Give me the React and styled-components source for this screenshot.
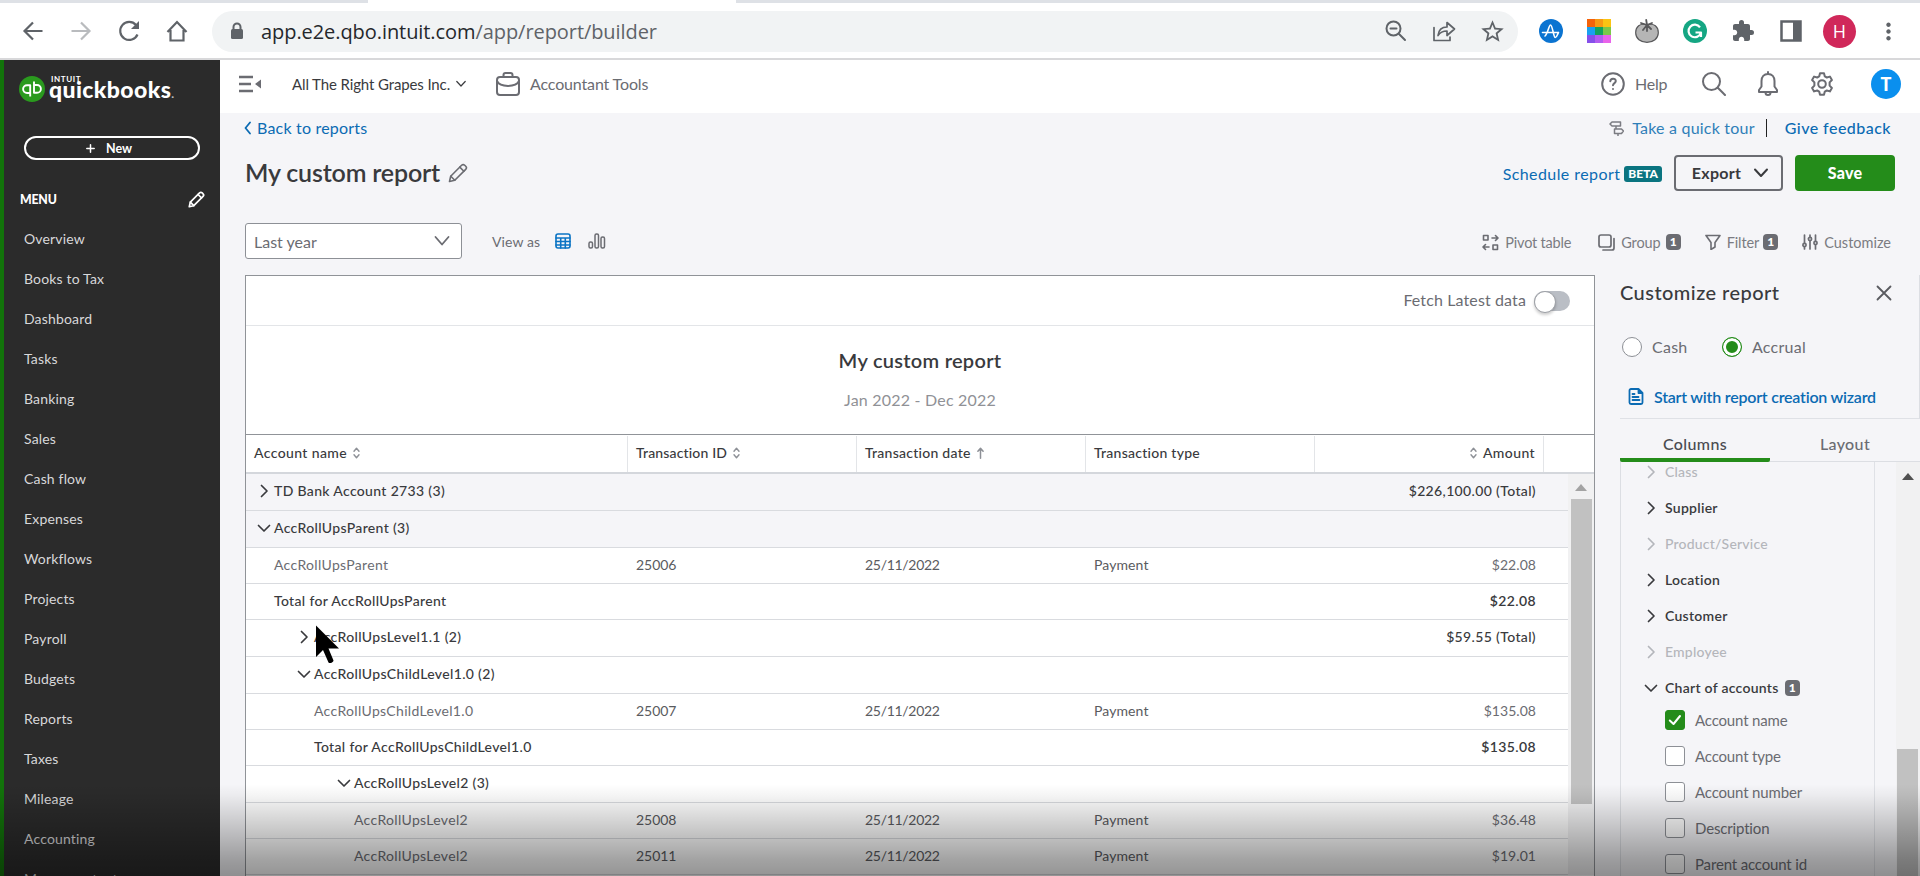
import React from 'react'
import styled, { createGlobalStyle } from 'styled-components'
import { MdExtension, MdStarBorder, MdMoreVert } from 'react-icons/md'

const menuItems = [
  'Overview', 'Books to Tax', 'Dashboard', 'Tasks', 'Banking', 'Sales', 'Cash flow', 'Expenses', 'Workflows',
  'Projects', 'Payroll', 'Budgets', 'Reports', 'Taxes', 'Mileage', 'Accounting', 'My accountant',
]

const rows = [
  { kind: 'group', level: 0, open: false, name: 'TD Bank Account 2733 (3)', amount: '$226,100.00 (Total)', h: 37, shade: true },
  { kind: 'group', level: 0, open: true, name: 'AccRollUpsParent (3)', h: 37, shade: true },
  { kind: 'item', level: 0, name: 'AccRollUpsParent', id: '25006', amount: '$22.08', h: 36 },
  { kind: 'total', level: 0, name: 'Total for AccRollUpsParent', amount: '$22.08', h: 36 },
  { kind: 'group', level: 1, open: false, name: 'AccRollUpsLevel1.1 (2)', amount: '$59.55 (Total)', h: 37 },
  { kind: 'group', level: 1, open: true, name: 'AccRollUpsChildLevel1.0 (2)', h: 37 },
  { kind: 'item', level: 1, name: 'AccRollUpsChildLevel1.0', id: '25007', amount: '$135.08', h: 36 },
  { kind: 'total', level: 1, name: 'Total for AccRollUpsChildLevel1.0', amount: '$135.08', h: 36 },
  { kind: 'group', level: 2, open: true, name: 'AccRollUpsLevel2 (3)', h: 37 },
  { kind: 'item', level: 2, name: 'AccRollUpsLevel2', id: '25008', amount: '$36.48', h: 36 },
  { kind: 'item', level: 2, name: 'AccRollUpsLevel2', id: '25011', amount: '$19.01', h: 36 },
]

const groups = [
  { name: 'Class', off: true },
  { name: 'Supplier' },
  { name: 'Product/Service', off: true },
  { name: 'Location' },
  { name: 'Customer' },
  { name: 'Employee', off: true },
]

const fields = ['Account name', 'Account type', 'Account number', 'Description', 'Parent account id']

/* ---------- icons ---------- */

const Svg = ({ w = 20, h = w, box, sw = 2, children, ...rest }) => (
  <svg width={w} height={h} viewBox={box || `0 0 ${w} ${h}`} fill="none" stroke="currentColor"
    strokeWidth={sw} strokeLinecap="round" strokeLinejoin="round" {...rest}>{children}</svg>
)

const Chevron = ({ open, sw = 1.7 }) => (
  <Svg w={16} sw={sw}>
    {open ? <path d="M2.5 5.5 8 11l5.5-5.5" /> : <path d="M5.5 2.5 11 8l-5.5 5.5" />}
  </Svg>
)

const Pencil = ({ size, sw = 1.6 }) => (
  <Svg w={size} box="0 0 20 20" sw={sw}>
    <path d="M1.5 18.5l1.2-5.3L13.6 2.3a2.2 2.2 0 0 1 3.1 0l1 1a2.2 2.2 0 0 1 0 3.1L6.8 17.3z" />
    <path d="M11.8 4.1l4.1 4.1M2.8 13.2l4 4" />
  </Svg>
)

const Sort = () => (
  <Svg w={7} h={12} sw={1.4}><path d="M1 4.2l2.5-3L6 4.2M1 7.8l2.5 3L6 7.8" /></Svg>
)

/* ---------- global + frame ---------- */

const GlobalStyle = createGlobalStyle`
  * { box-sizing: border-box; }
  body {
    margin: 0;
    overflow: hidden;
    background: #fff;
    font-family: Lato, "Liberation Sans", sans-serif;
    color: #393a3d;
  }
  svg { flex: none; display: block; }
`

const Page = styled.div`
  position: relative;
  display: flex;
  flex-direction: column;
  width: 1920px;
  height: 876px;
  overflow: hidden;
`

const Fade = styled.div`
  position: absolute;
  left: 0;
  right: 0;
  bottom: 0;
  height: 92px;
  background: linear-gradient(to bottom, rgba(0,0,0,0) 0%, rgba(0,0,0,.04) 12%, rgba(0,0,0,.25) 58%, rgba(0,0,0,.36) 82%, rgba(0,0,0,.42) 100%);
  pointer-events: none;
`

/* ---------- browser ---------- */

const TabStrip = styled.div`
  display: flex;
  height: 3px;
  background: #dee1e6;
  flex: none;
`

const ActiveTab = styled.div`
  width: 368px;
  margin-left: 368px;
  background: #fff;
`

const BrowserBar = styled.div`
  display: flex;
  align-items: center;
  flex: none;
  height: 57px;
  padding: 0 10px 0 21px;
  border-bottom: 2px solid #d8d8da;
  color: #5f6368;
`

const NavIcons = styled.div`
  display: flex;
  gap: 24px;
  width: 191px;
  .off { color: #b9bbbe; }
`

const Address = styled.div`
  display: flex;
  align-items: center;
  flex: none;
  width: 1306px;
  height: 41px;
  margin-top: 1px;
  padding: 0 14px 0 18px;
  border-radius: 21px;
  background: #f1f3f4;
`

const Url = styled.div`
  flex: 1;
  margin-left: 17px;
  font: 400 20px "Open Sans", sans-serif;
  letter-spacing: -0.07px;
  color: #5f6368;
  b { font-weight: 400; color: #25282c; }
`

const AddressIcons = styled.div`
  display: flex;
  align-items: center;
  gap: 24px;
  svg:last-child { margin: 0 -1.5px; }
`

const Extensions = styled.div`
  display: flex;
  align-items: center;
  gap: 24px;
  margin: 1px 0 0 21px;
`

const Avatar = styled.div`
  display: flex;
  align-items: center;
  justify-content: center;
  width: ${p => p.$size}px;
  height: ${p => p.$size}px;
  margin: ${p => p.$m || 0};
  border-radius: 50%;
  background: ${p => p.$bg};
  color: #fff;
  font-size: 18px;
  font-weight: ${p => p.$bold ? 900 : 400};
  font-family: ${p => p.$bold ? 'Lato' : '"Open Sans"'}, sans-serif;
`

/* ---------- sidebar ---------- */

const Body = styled.div`
  display: flex;
  flex: 1;
  min-height: 0;
`

const Sidebar = styled.nav`
  flex: none;
  width: 220px;
  height: 816px;
  overflow: hidden;
  border-left: 4px solid #12730a;
  background: #2b2b2b;
  color: #fff;
`

const Logo = styled.div`
  display: flex;
  align-items: flex-start;
  gap: 4px;
  height: 76px;
  padding: 15px 0 0 15px;
`

const Wordmark = styled.div`
  display: flex;
  flex-direction: column;
  width: 130px;
  padding-top: 1px;
  small {
    height: 7px;
    margin-left: 2px;
    font: 700 8px/7px Lato, sans-serif;
    letter-spacing: .6px;
  }
  span {
    margin-top: -5px;
    font: 900 23px/22px Lato, sans-serif;
    letter-spacing: .4px;
    white-space: nowrap;
  }
  i { font-size: 12px; color: #bbb; font-style: normal; }
`

const NewButton = styled.button`
  display: flex;
  align-items: center;
  justify-content: center;
  gap: 11px;
  width: 176px;
  height: 24px;
  margin-left: 20px;
  padding: 0 6px 0 0;
  border: 2px solid #fff;
  border-radius: 12px;
  background: none;
  color: #fff;
  font: 700 12.5px Lato, sans-serif;
`

const MenuHead = styled.div`
  display: flex;
  align-items: center;
  justify-content: space-between;
  height: 40px;
  margin-top: 19px;
  padding: 1px 15px 0 16px;
  font-size: 12.3px;
  font-weight: 900;
  letter-spacing: -.2px;
`

const MenuItem = styled.div`
  height: 40px;
  padding-left: 20px;
  font-size: 14px;
  line-height: 40px;
  letter-spacing: .16px;
  color: #d8d8da;
`

/* ---------- main ---------- */

const Main = styled.main`
  display: flex;
  flex-direction: column;
  width: 1700px;
  background: #f5f5f8;
`

const Header = styled.header`
  display: flex;
  align-items: center;
  flex: none;
  height: 53px;
  padding: 0 19px 5px 19px;
  background: #fff;
  color: #6b6c72;
`

const Company = styled.div`
  display: flex;
  align-items: center;
  gap: 6px;
  width: 204px;
  margin-left: 31px;
  font-size: 15px;
  letter-spacing: -.12px;
  color: #393a3d;
  white-space: nowrap;
`

const Tools = styled.div`
  display: flex;
  align-items: center;
  gap: 10px;
  flex: 1;
  padding-bottom: 1px;
  font-size: 16px;
  letter-spacing: -.15px;
`

const HeaderRight = styled.div`
  display: flex;
  align-items: center;
  span { width: 67px; margin: 0 0 2px 10px; font-size: 16px; letter-spacing: -.2px; }
  .bell { margin: 0 30px; }
  .gear { margin-right: 37px; }
`

const LinkRow = styled.div`
  display: flex;
  align-items: center;
  flex: none;
  height: 31px;
  padding: 0 29px 2px 24px;
  color: #0b6bb3;
`

const Link = styled.a`
  margin-left: ${p => p.$ml || 0}px;
  font-size: 16px;
  font-weight: ${p => p.$medium ? 500 : 400};
  letter-spacing: ${p => p.$ls}px;
  color: ${p => p.$soft ? '#2f7fb8' : '#0b6bb3'};
  white-space: nowrap;
`

const Rule = styled.div`
  width: 1px;
  height: 18px;
  margin: 0 18px 0 11px;
  background: #222;
`

const Push = styled.div`flex: 1;`

const TitleRow = styled.div`
  display: flex;
  align-items: center;
  flex: none;
  height: 58px;
  padding: 0 25px;
  color: #6b6c72;
`

const Title = styled.h1`
  margin: 0 8px 3px 0;
  font-size: 25px;
  font-weight: 600;
  letter-spacing: -.18px;
  color: #393a3d;
`

const Beta = styled.span`
  margin: 2px 12px 0 4px;
  padding: 0 4px;
  border-radius: 3px;
  background: #0a7480;
  color: #fff;
  font-size: 12px;
  font-weight: 900;
  line-height: 16px;
`

const Button = styled.button`
  display: flex;
  align-items: center;
  justify-content: center;
  gap: 12px;
  width: ${p => p.$primary ? 100 : 109}px;
  height: 36px;
  margin-left: ${p => p.$primary ? 12 : 0}px;
  padding: 0 0 1px ${p => p.$primary ? 0 : 4}px;
  border: 2px solid ${p => p.$primary ? '#248c1a' : '#6b6c72'};
  border-radius: 4px;
  background: ${p => p.$primary ? '#248c1a' : 'transparent'};
  color: ${p => p.$primary ? '#fff' : '#393a3d'};
  font: ${p => p.$primary ? 900 : 700} 16px Lato, sans-serif;
  letter-spacing: .25px;
`

const FilterRow = styled.div`
  display: flex;
  align-items: center;
  flex: none;
  height: 73px;
  padding: 5px 29px 0 25px;
  color: #6b6c72;
`

const Select = styled.div`
  display: flex;
  align-items: center;
  justify-content: space-between;
  width: 217px;
  height: 36px;
  margin-right: 30px;
  padding: 0 11px 0 8px;
  border: 1px solid #8d9096;
  border-radius: 3px;
  background: #fff;
  font-size: 16px;
`

const ViewAs = styled.div`
  display: flex;
  align-items: center;
  gap: 15px;
  font-size: 14px;
  letter-spacing: .1px;
  svg + svg { margin-left: 2px; }
`

const Action = styled.div`
  display: flex;
  align-items: center;
  gap: 6px;
  margin-left: ${p => p.$ml}px;
  padding-top: 2px;
  font-size: 14.5px;
  letter-spacing: ${p => p.$ls || 0}px;
  color: #7b7c82;
  svg { color: #6b6c72; }
`

const Count = styled.span`
  width: 15px;
  height: 16px;
  margin-left: ${p => p.$ml || 0}px;
  border-radius: 4px;
  background: #6b6c72;
  color: #fff;
  font-size: 12px;
  font-weight: 900;
  line-height: 16px;
  text-align: center;
  letter-spacing: 0;
`

/* ---------- report ---------- */

const Work = styled.div`
  display: flex;
  flex: 1;
  min-height: 0;
  padding-left: 25px;
`

const Report = styled.section`
  flex: none;
  width: 1350px;
  border: 1px solid #909398;
  border-bottom: 0;
  background: #fff;
`

const Fetch = styled.div`
  display: flex;
  align-items: center;
  justify-content: flex-end;
  gap: 8px;
  height: 50px;
  padding-right: 24px;
  border-bottom: 1px solid #e3e5e8;
  color: #6b6c72;
  font-size: 16px;
  letter-spacing: .12px;
  span { margin-bottom: 2px; }
`

const Toggle = styled.div`
  width: 36px;
  height: 20px;
  border-radius: 10px;
  background: #babec5;
  &::before {
    content: '';
    display: block;
    width: 20px;
    height: 20px;
    border: 1px solid #9c9fa5;
    border-radius: 50%;
    background: #fff;
    box-shadow: 0 2px 3px rgba(0,0,0,.2);
  }
`

const ReportTitle = styled.div`
  display: flex;
  flex-direction: column;
  align-items: center;
  height: 108px;
  padding-top: 22px;
  h2 { margin: 0; font-size: 20px; font-weight: 600; line-height: 24px; letter-spacing: .28px; }
  p { margin: 18px 0 0; font-size: 16px; line-height: 20px; letter-spacing: .21px; color: #909196; }
`

const Grid = styled.div`
  display: grid;
  grid-template-columns: 382px 229px 229px 229px 229px 1fr;
`

const HeadRow = styled(Grid)`
  height: 40px;
  border-top: 1px solid #909398;
  border-bottom: 2px solid #d4d7dc;
`

const HeadCell = styled.div`
  display: flex;
  align-items: center;
  gap: 6px;
  justify-content: ${p => p.$right ? 'flex-end' : 'flex-start'};
  margin-top: 1px;
  padding: 0 8px 3px;
  border-right: 1px solid #e3e5e8;
  font-size: 14px;
  font-weight: 500;
  letter-spacing: ${p => p.$ls || .26}px;
  svg { color: #8d9096; }
  &:last-child { border: 0; }
`

const TableBody = styled.div`
  display: flex;
  background: #f5f5f8;
`

const Rows = styled.div`
  width: 1322px;
`

const Row = styled(Grid)`
  align-items: center;
  height: ${p => p.$h}px;
  padding-bottom: ${p => p.$h === 37 ? 3 : 2}px;
  border-bottom: 1px solid #d9dbdf;
  background: ${p => p.$shade ? '#f5f5f8' : '#fff'};
  font-size: 14px;
  font-weight: ${p => p.$item ? 400 : 500};
  letter-spacing: ${p => p.$item ? .33 : .34}px;
  color: ${p => p.$item ? '#6b6c72' : '#393a3d'};
`

const Name = styled.div`
  display: flex;
  align-items: center;
  gap: 2px;
  padding-left: ${p => 28 + p.$level * 40}px;
  white-space: nowrap;
  svg { margin-left: -18px; }
`

const Cell = styled.div`
  padding-left: 8px;
  letter-spacing: ${p => p.$ls || 0}px;
  color: #5a5b60;
`

const Amount = styled.div`
  padding-right: 8px;
  text-align: right;
  font-weight: ${p => p.$bold ? 600 : 'inherit'};
  letter-spacing: ${p => p.$ls}px;
`

const Scroll = styled.div`
  display: flex;
  flex-direction: column;
  align-items: center;
  width: 26px;
  padding-top: 10px;
  background: #f1f1f2;
  color: #a3a3a3;
`

const Thumb = styled.div`
  width: 21px;
  height: ${p => p.$h}px;
  margin-top: ${p => p.$mt}px;
  background: #c1c1c1;
`

/* ---------- customize panel ---------- */

const Panel = styled.aside`
  flex: 1;
  padding-left: 25px;
`

const PanelTop = styled.div`
  height: 144px;
  border-right: 1px solid #dcdee3;
  border-bottom: 1px solid #dfe1e6;
`

const PanelHead = styled.div`
  display: flex;
  align-items: center;
  justify-content: space-between;
  height: 36px;
  padding-right: 27px;
  font-size: 20px;
  font-weight: 500;
  letter-spacing: .45px;
  span { margin-bottom: 2px; }
  svg { color: #5a5b60; }
`

const Radios = styled.div`
  display: flex;
  height: 72px;
  align-items: center;
  gap: 10px;
  padding-left: 2px;
  font-size: 16px;
  color: #6b6c72;
  span { width: 60px; margin-top: -2px; letter-spacing: .25px; }
`

const Radio = styled.div`
  width: 20px;
  height: 20px;
  border: 1px solid ${p => p.$on ? '#248c1a' : '#8d9096'};
  border-radius: 50%;
  background: ${p => p.$on ? '#248c1a' : '#fff'};
  box-shadow: inset 0 0 0 3px #fff;
`

const Wizard = styled.div`
  display: flex;
  align-items: center;
  gap: 10px;
  height: 26px;
  padding-left: 8px;
  color: #0b6bb3;
  font-size: 16px;
  font-weight: 600;
  letter-spacing: -.22px;
`

const Tabs = styled.div`
  display: flex;
  height: 43px;
  border-bottom: 1px solid #dcdee3;
`

const Tab = styled.div`
  width: 150px;
  height: 43px;
  padding-top: 2px;
  border-bottom: 4px solid ${p => p.$on ? '#248c1a' : 'transparent'};
  border-radius: 2px;
  color: ${p => p.$on ? '#4a4b50' : '#6b6c72'};
  font-size: 16px;
  font-weight: 500;
  letter-spacing: .36px;
  line-height: 46px;
  text-align: center;
`

const PanelBody = styled.div`
  display: flex;
  justify-content: space-between;
  height: 414px;
`

const FieldList = styled.div`
  width: 255px;
  height: 414px;
  overflow: hidden;
  border-left: 1px solid #dcdee3;
  border-right: 1px solid #dfe1e6;
  & > :first-child { margin-top: -8px; }
`

const Group = styled.div`
  display: flex;
  align-items: center;
  gap: 6px;
  height: 36px;
  padding: 0 0 1px 22px;
  font-size: 14px;
  font-weight: ${p => p.$off ? 500 : 600};
  letter-spacing: ${p => p.$off ? .2 : .27}px;
  color: ${p => p.$off ? '#b4b6bb' : '#393a3d'};
`

const Field = styled.div`
  display: flex;
  align-items: center;
  gap: 10px;
  height: 36px;
  margin-top: ${p => p.$first ? -4 : 0}px;
  padding-left: 44px;
  font-size: 15px;
  letter-spacing: -.16px;
  color: #6b6c72;
`

const Check = styled.div`
  display: flex;
  align-items: center;
  justify-content: center;
  width: 20px;
  height: 20px;
  border: 1px solid ${p => p.$on ? '#248c1a' : '#8d9096'};
  border-radius: 3px;
  background: ${p => p.$on ? '#248c1a' : '#fff'};
  color: #fff;
`

const PanelScroll = styled(Scroll)`
  width: 24px;
  padding: 11px 1px 0 0;
  color: #505050;
`

const Cursor = styled.svg`
  position: absolute;
  left: 316px;
  top: 625px;
`

const swatches = ['#f4630b', '#f79a13', '#fbc413', '#19a0f0', '#12a25e', '#7cc749', '#8650ea', '#b35cf0', '#e963ea']

function Browser() {
  return (
    <>
      <TabStrip><ActiveTab /></TabStrip>
      <BrowserBar>
        <NavIcons>
          <Svg w={24} sw={2.2} strokeLinecap="butt" strokeLinejoin="miter"><path d="M21.5 12H4M12 3.5L3.5 12l8.5 8.5" /></Svg>
          <Svg w={24} sw={2.2} strokeLinecap="butt" strokeLinejoin="miter" className="off"><path d="M2.5 12H20M12 3.5l8.5 8.5-8.5 8.5" /></Svg>
          <Svg w={24} sw={2.2} strokeLinecap="butt"><path d="M20.5 15.5A9 9 0 1 1 19 6" /><path d="M22 2v8h-8z" fill="currentColor" stroke="none" /></Svg>
          <Svg w={24} sw={2.2} strokeLinecap="butt" strokeLinejoin="miter"><path d="M2.5 13L12 3l9.5 10M5.5 11v10.5h13V11" /></Svg>
        </NavIcons>
        <Address>
          <Svg w={14} h={18} sw={2}><path d="M3.5 8V5a3.5 3.5 0 0 1 7 0v3" /><rect x="1" y="7" width="12" height="10" rx="1.5" fill="currentColor" stroke="none" /></Svg>
          <Url><b>app.e2e.qbo.intuit.com</b>/app/report/builder</Url>
          <AddressIcons>
            <Svg w={24} sw={2}><circle cx="9.5" cy="9.5" r="7" /><path d="M6.5 9.5h6M15 15l6 6" /></Svg>
            <Svg w={24} sw={1.7}><path d="M2 8.5V21.5h16V18" /><path d="M6 16.5c.6-5.5 4-8.5 9-8.5V3.5l7.5 6.5-7.5 6.5V12c-4 0-7 1.5-9 4.5z" /></Svg>
            <MdStarBorder size={27} />
          </AddressIcons>
        </Address>
        <Extensions>
          <Svg w={24} sw={1.6} stroke="#fff">
            <circle cx="12" cy="12" r="12" fill="#0b74d1" stroke="none" />
            <path d="M3.5 13.5H19M6 17c2.5-2 4-11 5.5-11 2 0 3 12.5 4.8 12.5 1.5 0 2.2-3.5 3.2-5" />
          </Svg>
          <Svg w={24} stroke="none">
            {swatches.map((c, i) => <rect key={c} x={(i % 3) * 8} y={Math.floor(i / 3) * 8} width="8" height="8" fill={c} />)}
          </Svg>
          <Svg w={24} sw={1.2} stroke="#58585a">
            <path d="M12 6c7-2.5 11.5 2 11.3 8-.2 5.5-4.8 9.3-11.3 9.3S.8 19.5.7 14C.5 8 5 3.5 12 6z" fill="#b5b5b5" />
            <path d="M12 6L6 4M12 6l-4 5M12 6l5-2M12 6l4 4M12 6v6M12 6l-.8-5" strokeWidth="1.8" />
          </Svg>
          <Svg w={24} sw={2.2} stroke="#fff" strokeLinecap="butt">
            <circle cx="12" cy="12" r="12" fill="#15a683" stroke="none" />
            <path d="M17 8.3A6.3 6.3 0 1 0 17.8 14M12.5 13.5H18V18" />
          </Svg>
          <MdExtension size={24} />
          <Svg w={24} sw={2.5} strokeLinejoin="miter"><rect x="2.5" y="2.5" width="19" height="19" /><rect x="14" y="2.5" width="7.5" height="19" fill="currentColor" stroke="none" /></Svg>
          <Avatar $size={33} $bg="#d0285a" $m="0 -5px 0 -4px">H</Avatar>
          <MdMoreVert size={27} />
        </Extensions>
      </BrowserBar>
    </>
  )
}

function Side() {
  return (
    <Sidebar>
      <Logo>
        <Svg w={26} h={27} sw={1.9} stroke="#fff" strokeLinecap="butt">
          <circle cx="13" cy="14" r="13" fill="#2a9a1e" stroke="none" />
          <path d="M11 18H8a3.9 3.9 0 0 1 0-7.8h3.2v11.3M15 6.5v11.3h3a3.9 3.9 0 0 0 0-7.8h-3" />
        </Svg>
        <Wordmark><small>INTUIT</small><span>quickbooks<i>.</i></span></Wordmark>
      </Logo>
      <NewButton>
        <Svg w={9} sw={1.5}><path d="M4.5 .8v7.4M.8 4.5h7.4" /></Svg>New
      </NewButton>
      <MenuHead>MENU<Pencil size={17} sw={2} /></MenuHead>
      {menuItems.map(m => <MenuItem key={m}>{m}</MenuItem>)}
    </Sidebar>
  )
}

function TopBar() {
  return (
    <Header>
      <Svg w={22} sw={2.4} strokeLinecap="butt"><path d="M0 4h14M0 11h12M0 18h14" /><path d="M22 6.5v9L16 11z" fill="currentColor" stroke="none" /></Svg>
      <Company>All The Right Grapes Inc.
        <Svg w={10} sw={1.2}><path d="M.8 2.5L5 7l4.2-4.5" /></Svg>
      </Company>
      <Tools>
        <Svg w={24} sw={2}>
          <rect x="1" y="5" width="22" height="18" rx="3" /><path d="M7.5 5V3a2 2 0 0 1 2-2h5a2 2 0 0 1 2 2v2" /><path d="M1 9c3 6.5 19 6.5 22 0" />
        </Svg>
        Accountant Tools
      </Tools>
      <HeaderRight>
        <Svg w={24} sw={2}><circle cx="12" cy="12" r="10.8" /><path d="M9.3 9.2c.2-3.6 5.6-3.2 5.5-.1 0 2-2.7 2-2.8 4.2M12 17v.1" /></Svg>
        <span>Help</span>
        <Svg w={24} sw={2}><circle cx="9.5" cy="9.5" r="8.5" /><path d="M15.8 15.8l7.2 7.2" /></Svg>
        <Svg w={24} h={26} sw={2} className="bell">
          <path d="M12 1v2M12 3C8 3 5.5 6 5.5 10v5.5L3 19v2h18v-2l-2.5-3.5V10C18.5 6 16 3 12 3zM9.5 21.5a2.5 2.5 0 0 0 5 0" />
        </Svg>
        <Svg w={24} sw={2} className="gear">
          <circle cx="12" cy="12" r="3.8" />
          <path d="M10 1.2h4l.8 3.2 2 1.1 3.1-.9 2 3.4-2.3 2.4v3.2l2.3 2.4-2 3.4-3.1-.9-2 1.1-.8 3.2h-4l-.8-3.2-2-1.1-3.1.9-2-3.4 2.3-2.4v-3.2L2.1 8l2-3.4 3.1.9 2-1.1z" />
        </Svg>
        <Avatar $size={30} $bg="#0a8fee" $bold>T</Avatar>
      </HeaderRight>
    </Header>
  )
}

const amountSpacing = { group: .36, total: .4, item: .05 }

function ReportTable() {
  return (
    <Report>
      <Fetch><span>Fetch Latest data</span><Toggle /></Fetch>
      <ReportTitle><h2>My custom report</h2><p>Jan 2022 - Dec 2022</p></ReportTitle>
      <HeadRow>
        <HeadCell $ls={.38}>Account name<Sort /></HeadCell>
        <HeadCell $ls={.16}>Transaction ID<Sort /></HeadCell>
        <HeadCell>Transaction date
          <Svg w={7} h={12} sw={1.5}><path d="M3.5 11.2V1.5M.9 4.2l2.6-2.9 2.6 2.9" /></Svg>
        </HeadCell>
        <HeadCell>Transaction type</HeadCell>
        <HeadCell $right $ls={.4}><Sort />Amount</HeadCell>
        <HeadCell />
      </HeadRow>
      <TableBody>
        <Rows>
          {rows.map((r, i) => (
            <Row key={i} $h={r.h} $shade={r.shade} $item={r.kind === 'item'}>
              <Name $level={r.level}>{r.kind === 'group' && <Chevron open={r.open} />}{r.name}</Name>
              <Cell $ls={-.05}>{r.id}</Cell>
              <Cell $ls={-.3}>{r.id && '25/11/2022'}</Cell>
              <Cell $ls={.1}>{r.id && 'Payment'}</Cell>
              <Amount $bold={r.kind === 'total'} $ls={amountSpacing[r.kind]}>{r.amount}</Amount>
            </Row>
          ))}
        </Rows>
        <Scroll>
          <Svg w={12} h={7} stroke="none"><path d="M0 7l6-7 6 7z" fill="currentColor" /></Svg>
          <Thumb $h={305} $mt={8} />
        </Scroll>
      </TableBody>
    </Report>
  )
}

function CustomizePanel() {
  return (
    <Panel>
      <PanelTop>
        <PanelHead><span>Customize report</span>
          <Svg w={16} sw={1.8}><path d="M1.5 1.5l13 13M14.5 1.5l-13 13" /></Svg>
        </PanelHead>
        <Radios>
          <Radio /><span>Cash</span>
          <Radio $on /><span>Accrual</span>
        </Radios>
        <Wizard>
          <Svg w={16} h={17} sw={1.8}><path d="M10.5 1H3a1.5 1.5 0 0 0-1.5 1.5v12A1.5 1.5 0 0 0 3 16h10a1.5 1.5 0 0 0 1.5-1.5V5zM10.5 1v4h4M4.5 9h6M4.5 12h7M4.5 6h2" /></Svg>
          Start with report creation wizard
        </Wizard>
      </PanelTop>
      <Tabs><Tab $on>Columns</Tab><Tab>Layout</Tab></Tabs>
      <PanelBody>
        <FieldList>
          {groups.map(g => <Group key={g.name} $off={g.off}><Chevron />{g.name}</Group>)}
          <Group><Chevron open />Chart of accounts<Count>1</Count></Group>
          {fields.map((f, i) => (
            <Field key={f} $first={i === 0}>
              <Check $on={i === 0}>
                {i === 0 && <Svg w={14} sw={2}><path d="M1.8 7.5L5.5 11l6.5-8" /></Svg>}
              </Check>
              {f}
            </Field>
          ))}
        </FieldList>
        <PanelScroll>
          <Svg w={12} h={7} stroke="none"><path d="M0 7l6-7 6 7z" fill="currentColor" /></Svg>
          <Thumb $h={140} $mt={269} />
        </PanelScroll>
      </PanelBody>
    </Panel>
  )
}

export default function App() {
  return (
    <Page>
      <GlobalStyle />
      <Browser />
      <Body>
        <Side />
        <Main>
          <TopBar />
          <LinkRow>
            <Svg w={7} h={14} sw={1.8}><path d="M6 1.5L1.5 7 6 12.5" /></Svg>
            <Link $ls={.2} $ml={6}>Back to reports</Link>
            <Push />
            <Svg w={15} h={16} sw={1.5} stroke="#7b7c82"><path d="M3 2h8.5v4H3L1 4zM5.5 9h7l2 2-2 2.5h-7zM7 6v3M9 13.5v2" /></Svg>
            <Link $ls={.21} $soft $ml={8}>Take a quick tour</Link>
            <Rule />
            <Link $ls={.46} $medium>Give feedback</Link>
          </LinkRow>
          <TitleRow>
            <Title>My custom report</Title>
            <Pencil size={20} />
            <Push />
            <Link $ls={.42}>Schedule report</Link>
            <Beta>BETA</Beta>
            <Button>Export<Svg w={16} sw={2}><path d="M2 4.5L8 11l6-6.5" /></Svg></Button>
            <Button $primary>Save</Button>
          </TitleRow>
          <FilterRow>
            <Select>Last year<Svg w={16} sw={1.8}><path d="M1.5 4L8 11.5 14.5 4" /></Svg></Select>
            <ViewAs>View as
              <Svg w={16} sw={1.6} stroke="#0b74c4">
                <rect x="1" y="1" width="14" height="14" rx="2" /><path d="M1 5h14M1 8.5h14M1 12h14M5.7 5v10M10.3 5v10" />
              </Svg>
              <Svg w={18} h={16} sw={1.5}><rect x="1" y="9" width="3.5" height="6" rx="1.5" /><rect x="7" y="1" width="3.5" height="14" rx="1.5" /><rect x="13" y="4" width="3.5" height="11" rx="1.5" /></Svg>
            </ViewAs>
            <Push />
            <Action $ls={-.19}>
              <Svg w={17} sw={1.6}><rect x="1.5" y="1.5" width="4.5" height="4.5" /><rect x="11" y="11" width="4.5" height="4.5" /><path d="M10 4h5.5M13.5 1.5L16 4l-2.5 2.5M7 13H1.5M3.5 10.5L1 13l2.5 2.500" /></Svg>
              Pivot table
            </Action>
            <Action $ml={27} $ls={-.1}>
              <Svg w={17} sw={1.7}><rect x="1" y="1" width="12" height="12" rx="2" /><path d="M16 4.5V14a2 2 0 0 1-2 2H5" /></Svg>
              Group<Count $ml={-1}>1</Count>
            </Action>
            <Action $ml={24} $ls={-.1}>
              <Svg w={16} sw={1.6}><path d="M1 1.5h14L10 8.5V13l-4 2.5v-7z" /></Svg>
              Filter<Count $ml={-2}>1</Count>
            </Action>
            <Action $ml={24}>
              <Svg w={16} sw={1.7}><path d="M2.5 1v8M2.5 13v2M8 1v2M8 7v8M13.5 1v6M13.5 11v4" /><circle cx="2.5" cy="11" r="1.6" /><circle cx="8" cy="5" r="1.6" /><circle cx="13.5" cy="9" r="1.6" /></Svg>
              Customize
            </Action>
          </FilterRow>
          <Work>
            <ReportTable />
            <CustomizePanel />
          </Work>
        </Main>
      </Body>
      <Cursor width="24" height="39" viewBox="0 0 24 39">
        <path d="M0 .5V32l7-7 5.5 12.5c1 1.5 5 0 5-2L12.5 23.5H23z" fill="#000" />
      </Cursor>
      <Fade />
    </Page>
  )
}
